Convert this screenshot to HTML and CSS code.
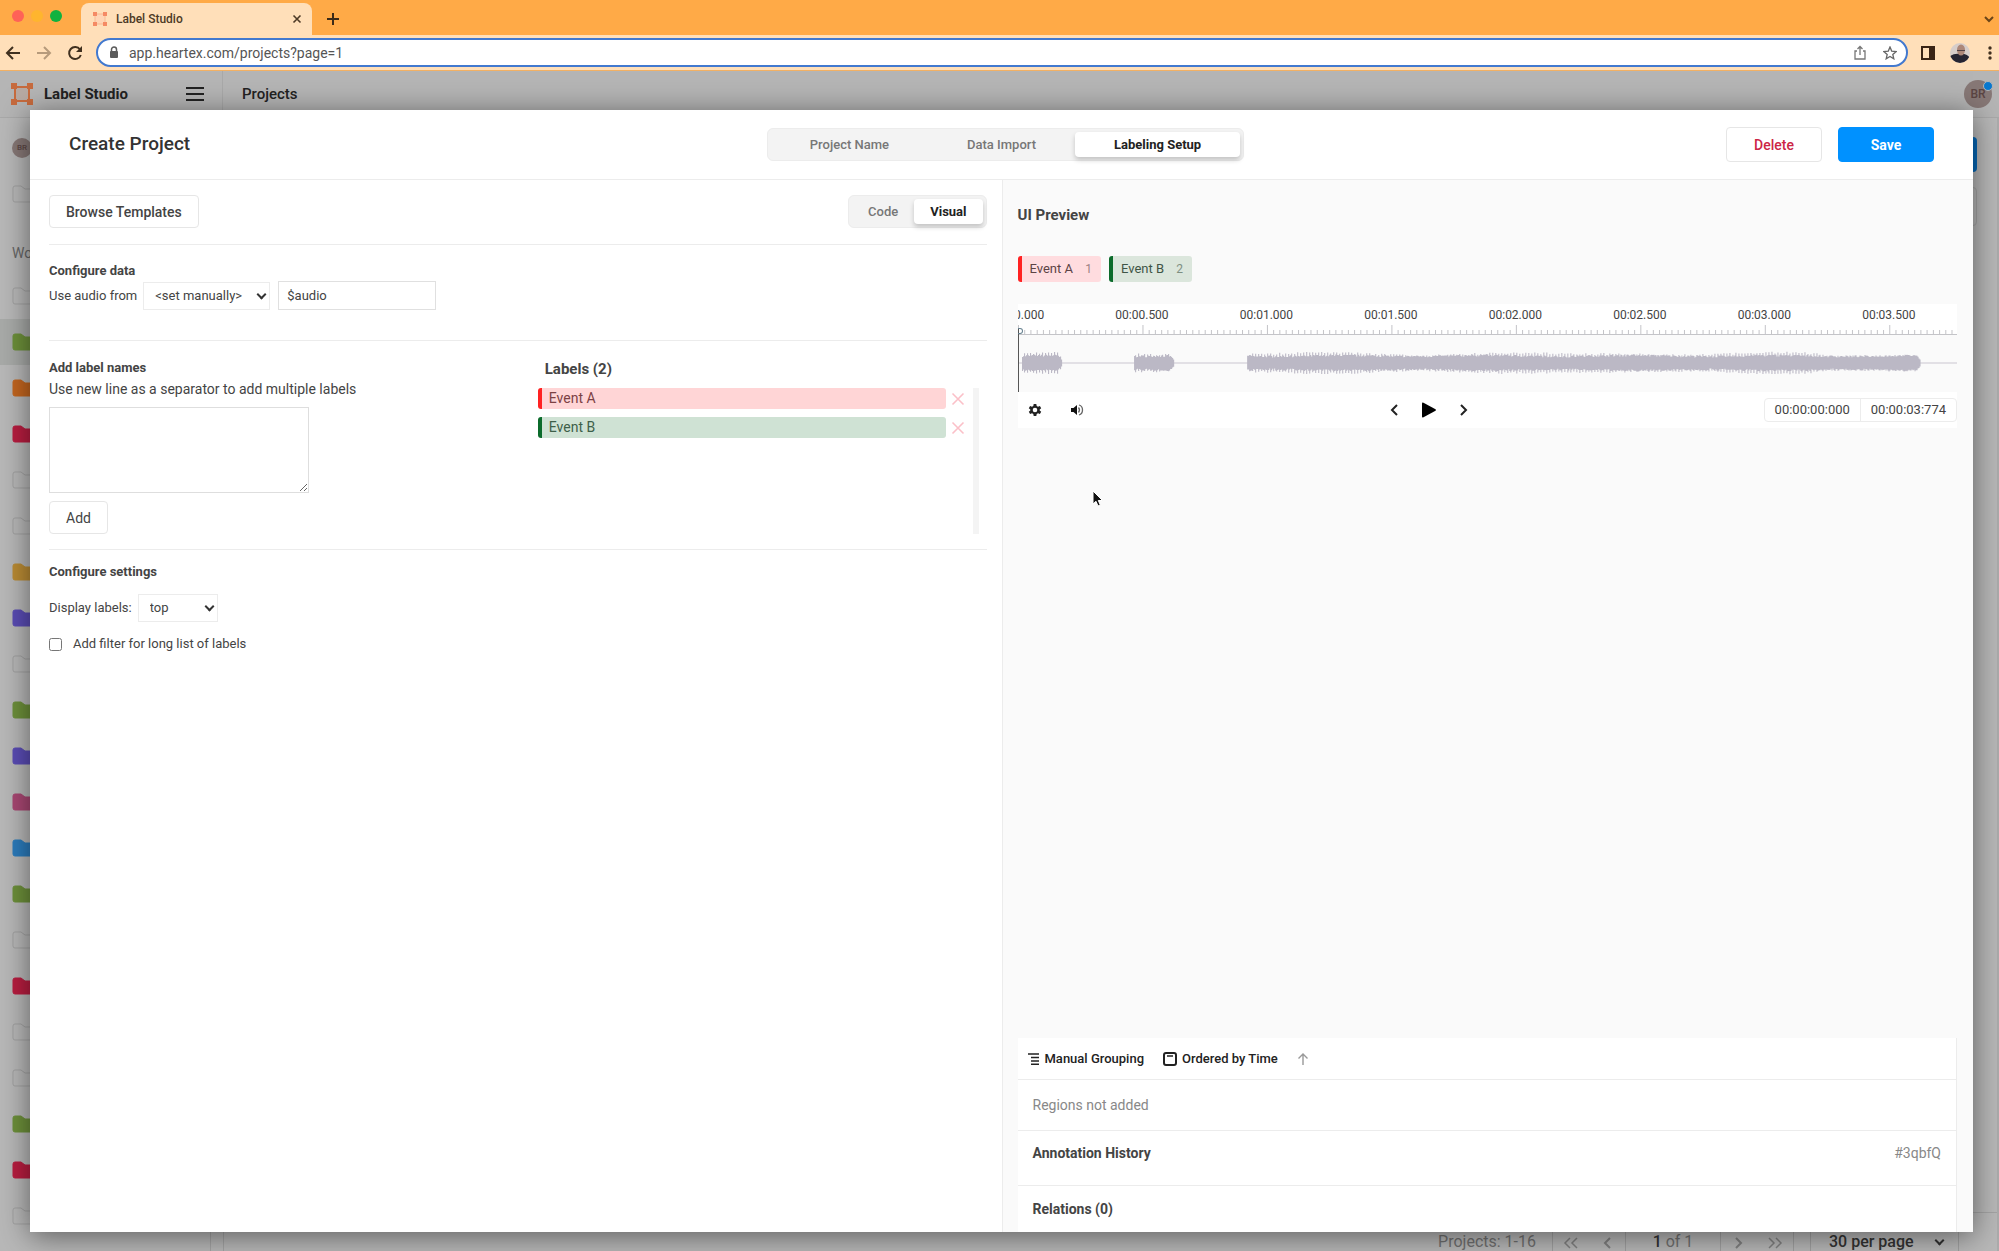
FILE: index.html
```html
<!DOCTYPE html>
<html lang="en">
<head>
  <meta charset="UTF-8">
  <meta name="viewport" content="width=device-width, initial-scale=1.0">
  <title>Label Studio</title>
  <link rel="stylesheet" href="styles.css">
</head>
<body>

  <!-- Shared icon shapes -->
  <svg class="sprite" aria-hidden="true">
    <symbol id="logo" viewBox="0 0 22 22">
      <path d="M4 4H18V18H4Z" fill="currentColor" fill-opacity=".15" stroke="currentColor" stroke-width="2"/>
      <path d="M0 0H6V6H0ZM16 0H22V6H16ZM0 16H6V22H0ZM16 16H22V22H16Z" fill="currentColor"/>
    </symbol>
    <symbol id="folder" viewBox="0 0 24 18">
      <path d="M1 3Q1 1 3 1H9L13 4H21Q23 4 23 6V15Q23 17 21 17H3Q1 17 1 15Z"/>
    </symbol>
    <symbol id="chevron" viewBox="0 0 10 16">
      <path d="M8 3L3 8L8 13" fill="none" stroke="currentColor" stroke-width="2"/>
    </symbol>
  </svg>

  <div class="browser">
    <div class="tab-strip">
      <div class="lights"><i class="red"></i><i class="yellow"></i><i class="green"></i></div>
      <div class="tab">
        <svg class="favicon" viewBox="0 0 16 16"><path d="M3 3H13V13H3Z" fill="#ffd5b5" stroke="#f7ba93" stroke-width="1"/><path d="M1 1H5V5H1ZM11 1H15V5H11ZM1 11H5V15H1ZM11 11H15V15H11Z" fill="#f58a64"/></svg>
        <span>Label Studio</span>
        <button class="icon-btn tab-close" aria-label="Close tab"><svg width="10" height="10" viewBox="0 0 10 10"><path d="M1.500 1.500L8.500 8.500M8.500 1.500L1.500 8.500" stroke="#4d3a26" stroke-width="1.600"/></svg></button>
      </div>
      <button class="icon-btn new-tab" aria-label="New tab"><svg width="12" height="12" viewBox="0 0 12 12"><path d="M6 0V12M0 6H12" stroke="#3c2b18" stroke-width="2"/></svg></button>
      <button class="icon-btn tab-menu" aria-label="Search tabs"><svg width="10" height="8" viewBox="0 0 10 8"><path d="M1 2L5 6L9 2" fill="none" stroke="#6b4519" stroke-width="2"/></svg></button>
    </div>
    <div class="toolbar">
      <button class="icon-btn" aria-label="Back"><svg width="16" height="16" viewBox="0 0 16 16"><path d="M8 2L2 8L8 14M2 8H15" fill="none" stroke="#40301f" stroke-width="2"/></svg></button>
      <button class="icon-btn" aria-label="Forward"><svg width="16" height="16" viewBox="0 0 16 16"><path d="M8 2L14 8L8 14M14 8H1" fill="none" stroke="#b69a7b" stroke-width="2"/></svg></button>
      <button class="icon-btn" aria-label="Reload"><svg width="16" height="16" viewBox="0 0 16 16"><path d="M13 4.500A6 6 0 1 0 13.800 10" fill="none" stroke="#40301f" stroke-width="2"/><path d="M15 1V7H9Z" fill="#40301f"/></svg></button>
      <div class="address">
        <svg width="10" height="13" viewBox="0 0 10 13"><path d="M2.500 6V3.500A2.500 2.500 0 0 1 7.500 3.500V6" fill="none" stroke="#5b5b5b" stroke-width="1.500"/><rect x="1" y="5" width="8" height="7" rx="1" fill="#5b5b5b"/></svg>
        <input type="text" aria-label="Address" value="app.heartex.com/projects?page=1">
        <svg width="14" height="16" viewBox="0 0 14 16"><path d="M4 6H2V14H12V6H10M7 10V2M4.500 4L7 1.500L9.500 4" fill="none" stroke="#777" stroke-width="1.300"/></svg>
        <svg class="star" width="14" height="14" viewBox="0 0 14 14"><path d="M7 1L8.700 5.100L13.200 5.500L9.800 8.400L10.800 12.800L7 10.500L3.200 12.800L4.200 8.400L.8 5.500L5.300 5.100Z" fill="none" stroke="#666" stroke-width="1.300"/></svg>
      </div>
      <button class="icon-btn" aria-label="Side panel"><svg width="14" height="14" viewBox="0 0 14 14"><path d="M1 1H13V13H1Z" fill="none" stroke="#3a2415" stroke-width="2"/><path d="M8 1H13V13H8Z" fill="#3a2415"/></svg></button>
      <button class="icon-btn profile" aria-label="Profile"><svg width="20" height="20" viewBox="0 0 20 20"><defs><clipPath id="face"><circle cx="10" cy="10" r="10"/></clipPath></defs><g clip-path="url(#face)"><path d="M0 0H20V20H0Z" fill="#d6cdca"/><path d="M0 20V13Q5 10 10 11Q16 10 20 15V20Z" fill="#252432"/><ellipse cx="11" cy="7" rx="4" ry="5.500" fill="#ac8779"/><path d="M7 7H15V8H7Z" fill="#504044"/></g></svg></button>
      <button class="icon-btn" aria-label="Menu"><svg width="4" height="14" viewBox="0 0 4 14" fill="#40301f"><circle cx="2" cy="2" r="1.700"/><circle cx="2" cy="7" r="1.700"/><circle cx="2" cy="12" r="1.700"/></svg></button>
    </div>
  </div>

  <div class="app">
    <header class="app-header">
      <svg class="app-logo"><use href="#logo"/></svg>
      <strong>Label Studio</strong>
      <button class="icon-btn" aria-label="Menu"><svg width="18" height="16" viewBox="0 0 18 16"><path d="M0 2H18M0 8H18M0 14H18" stroke="#222" stroke-width="2"/></svg></button>
      <span class="crumb">Projects</span>
      <span class="avatar">BR</span>
    </header>
    <div class="app-body">
      <aside class="sidebar">
        <div class="side-item"><span class="avatar small">BR</span></div>
        <div class="side-item"><svg class="folder"><use href="#folder"/></svg></div>
        <p class="side-title">Workspaces</p>
        <ul class="folders">
          <li><svg class="folder"><use href="#folder"/></svg></li>
          <li class="active"><svg class="folder green"><use href="#folder"/></svg></li>
          <li><svg class="folder orange"><use href="#folder"/></svg></li>
          <li><svg class="folder red"><use href="#folder"/></svg></li>
          <li><svg class="folder"><use href="#folder"/></svg></li>
          <li><svg class="folder"><use href="#folder"/></svg></li>
          <li><svg class="folder yellow"><use href="#folder"/></svg></li>
          <li><svg class="folder purple"><use href="#folder"/></svg></li>
          <li><svg class="folder"><use href="#folder"/></svg></li>
          <li><svg class="folder green"><use href="#folder"/></svg></li>
          <li><svg class="folder purple"><use href="#folder"/></svg></li>
          <li><svg class="folder pink"><use href="#folder"/></svg></li>
          <li><svg class="folder blue"><use href="#folder"/></svg></li>
          <li><svg class="folder green"><use href="#folder"/></svg></li>
          <li><svg class="folder"><use href="#folder"/></svg></li>
          <li><svg class="folder red"><use href="#folder"/></svg></li>
          <li><svg class="folder"><use href="#folder"/></svg></li>
          <li><svg class="folder"><use href="#folder"/></svg></li>
          <li><svg class="folder green"><use href="#folder"/></svg></li>
          <li><svg class="folder red"><use href="#folder"/></svg></li>
          <li><svg class="folder"><use href="#folder"/></svg></li>
        </ul>
      </aside>
      <main class="projects">
        <div class="project-list">
          <div class="create-edge"></div>
          <div class="card-edge"></div>
        </div>
        <footer class="pagination">
          <span>Projects: 1-16</span>
          <div class="pages">
            <button aria-label="First page"><svg width="16" height="16" viewBox="0 0 16 16"><path d="M7 3L2 8L7 13M14 3L9 8L14 13" fill="none" stroke="currentColor" stroke-width="1.500"/></svg></button>
            <button aria-label="Previous page"><svg width="10" height="16"><use href="#chevron"/></svg></button>
            <span class="current"><b>1</b> of 1</span>
            <button aria-label="Next page"><svg class="flip" width="10" height="16"><use href="#chevron"/></svg></button>
            <button aria-label="Last page"><svg class="flip" width="16" height="16" viewBox="0 0 16 16"><path d="M7 3L2 8L7 13M14 3L9 8L14 13" fill="none" stroke="currentColor" stroke-width="1.500"/></svg></button>
          </div>
          <span class="select per-page"><select aria-label="Page size"><option>30 per page</option></select></span>
        </footer>
      </main>
    </div>

    <div class="modal" role="dialog" aria-labelledby="modal-title">
      <header class="modal-header">
        <h1 id="modal-title">Create Project</h1>
        <nav class="toggle steps">
          <button>Project Name</button>
          <button>Data Import</button>
          <button class="selected">Labeling Setup</button>
        </nav>
        <div class="actions">
          <button class="btn danger">Delete</button>
          <button class="btn primary">Save</button>
        </div>
      </header>

      <div class="modal-body">
        <section class="config">
          <div class="config-bar">
            <button class="btn">Browse Templates</button>
            <div class="toggle">
              <button>Code</button>
              <button class="selected">Visual</button>
            </div>
          </div>

          <div class="config-data">
            <h2>Configure data</h2>
            <div class="row">
              <label for="source">Use audio from</label>
              <span class="select source"><select id="source"><option>&lt;set manually&gt;</option></select></span>
              <input class="variable" type="text" aria-label="Variable" value="$audio">
            </div>
          </div>

          <div class="config-labels">
            <div>
              <h2><label for="names">Add label names</label></h2>
              <p>Use new line as a separator to add multiple labels</p>
              <textarea id="names"></textarea>
              <button class="btn">Add</button>
            </div>
            <div class="labels">
              <h3>Labels (2)</h3>
              <ul>
                <li><span class="label event-a">Event A</span><button class="icon-btn" aria-label="Delete Event A"><svg width="14" height="14" viewBox="0 0 14 14"><path d="M1.500 1.500L12.500 12.500M12.500 1.500L1.500 12.500" stroke="#fbc0c8" stroke-width="1.600"/></svg></button></li>
                <li><span class="label event-b">Event B</span><button class="icon-btn" aria-label="Delete Event B"><svg width="14" height="14" viewBox="0 0 14 14"><path d="M1.500 1.500L12.500 12.500M12.500 1.500L1.500 12.500" stroke="#fbc0c8" stroke-width="1.600"/></svg></button></li>
              </ul>
            </div>
          </div>

          <div class="config-settings">
            <h2>Configure settings</h2>
            <div class="row">
              <label for="display">Display labels:</label>
              <span class="select display"><select id="display"><option>top</option></select></span>
            </div>
            <label class="check"><input type="checkbox"> Add filter for long list of labels</label>
          </div>
        </section>

        <section class="preview">
          <h3>UI Preview</h3>
          <div class="tags">
            <span class="tag event-a">Event A <i>1</i></span>
            <span class="tag event-b">Event B <i>2</i></span>
          </div>

          <div class="audio">
            <ol class="times">
              <li>00:00.000</li><li>00:00.500</li><li>00:01.000</li><li>00:01.500</li><li>00:02.000</li><li>00:02.500</li><li>00:03.000</li><li>00:03.500</li>
            </ol>
            <svg class="ticks" viewBox="0 0 939 9" preserveAspectRatio="none"><path id="ticks" stroke="#c4c4c8"/></svg>
            <div class="wave">
              <svg viewBox="0 0 939 57" preserveAspectRatio="none"><path d="M0 28H939" stroke="#c9c6cf"/><path id="wave" fill="#bbb8c5"/></svg>
            </div>
            <div class="playhead"></div>
            <div class="controls">
              <div class="left">
                <button class="icon-btn" aria-label="Settings"><svg width="14" height="14" viewBox="0 0 14 14"><path d="M5.700 1H8.300L8.700 2.900L10 3.700L11.900 3L13.200 5.300L11.700 6.500V7.500L13.200 8.700L11.900 11L10 10.300L8.700 11.100L8.300 13H5.700L5.300 11.100L4 10.300L2.100 11L.8 8.700L2.300 7.500V6.500L.8 5.300L2.100 3L4 3.700L5.300 2.900ZM7 4.700A2.300 2.300 0 1 0 7 9.300A2.300 2.300 0 1 0 7 4.700Z" fill="#222" fill-rule="evenodd"/></svg></button>
                <button class="icon-btn" aria-label="Volume"><svg width="14" height="14" viewBox="0 0 14 14"><path d="M1 5H3.500L7 2V12L3.500 9H1Z" fill="#111"/><path d="M8.500 4.500Q10.500 7 8.500 9.500M9 2Q12.500 3 12.500 7T9 12" fill="none" stroke="#666" stroke-width="1.300"/></svg></button>
              </div>
              <div class="transport">
                <button class="icon-btn" aria-label="Step back"><svg width="10" height="16"><use href="#chevron"/></svg></button>
                <button class="icon-btn" aria-label="Play"><svg width="16" height="16" viewBox="0 0 16 16"><path d="M1 1.500Q1 0 2.500 .8L14.500 7.300Q15.500 8 14.500 8.700L2.500 15.200Q1 16 1 14.500Z"/></svg></button>
                <button class="icon-btn" aria-label="Step forward"><svg class="flip" width="10" height="16"><use href="#chevron"/></svg></button>
              </div>
              <div class="clock"><span>00:00:00:000</span><span>00:00:03:774</span></div>
            </div>
          </div>

          <div class="outliner">
            <div class="group-bar">
              <button class="icon-btn"><svg width="12" height="12" viewBox="0 0 12 12"><path d="M0 1H11M3 4.500H11M3 8H11M3 11.300H11" stroke="#222" stroke-width="1.500"/></svg>Manual Grouping</button>
              <button class="icon-btn"><svg width="14" height="14" viewBox="0 0 14 14"><rect x="1" y="1" width="12" height="12" rx="2" fill="none" stroke="#222" stroke-width="2"/><path d="M4 4H10" stroke="#222" stroke-width="1.500"/></svg>Ordered by Time</button>
              <button class="icon-btn" aria-label="Sort direction"><svg width="12" height="14" viewBox="0 0 12 14"><path d="M6 13V2M1.500 6.500L6 2L10.500 6.500" fill="none" stroke="#999" stroke-width="1.400"/></svg></button>
            </div>
            <p class="empty">Regions not added</p>
            <div class="history"><b>Annotation History</b><span>#3qbfQ</span></div>
            <div class="relations"><b>Relations (0)</b></div>
          </div>
        </section>
      </div>
    </div>
  </div>

  <svg class="cursor" width="12" height="18" viewBox="0 0 12 18"><path d="M1 1V14L4 11.300L6 16L8.300 15L6.300 10.500H10.500Z" fill="#111" stroke="#fff"/></svg>

  <script src="script.js"></script>
</body>
</html>
```
FILE: styles.css
```css
* {
  box-sizing: border-box;
}

body {
  margin: 0;
  height: 100vh;
  display: flex;
  flex-direction: column;
  overflow: hidden;
  font-family: Roboto, "Liberation Sans", sans-serif;
  font-size: 14px;
  line-height: 20px;
  color: #444;
}

h1, h2, h3, p, ul, ol {
  margin: 0;
  padding: 0;
  list-style: none;
}

button, input, select, textarea {
  font: inherit;
  color: inherit;
}

svg {
  flex: none;
}

.sprite {
  position: absolute;
  width: 0;
  height: 0;
}

.icon-btn {
  display: flex;
  align-items: center;
  padding: 0;
  border: 0;
  background: none;
}

.flip {
  transform: scaleX(-1);
}

/* Browser window */
.tab-strip {
  height: 35px;
  display: flex;
  align-items: center;
  padding: 3px 5px 0 12px;
  background: #ffaa47;
}

.lights {
  display: flex;
  align-self: flex-start;
  gap: 7px;
  width: 69px;
  padding-top: 7px;
}

.lights i {
  width: 12px;
  height: 12px;
  border-radius: 50%;
}

.lights .red { background: #ff6257; }
.lights .yellow { background: #ffb52e; }
.lights .green { background: #10b23f; }

.tab {
  display: flex;
  align-items: center;
  gap: 8px;
  width: 231px;
  height: 32px;
  padding: 0 10px 0 11px;
  border-radius: 8px 8px 0 0;
  background: #ffdfb9;
  font-size: 12px;
  font-weight: 500;
  color: #4d3a26;
}

.favicon {
  width: 16px;
  height: 16px;
}

.tab-close {
  margin-left: auto;
}

.new-tab {
  margin-left: 15px;
}

.tab-menu {
  margin-left: auto;
}

.toolbar {
  height: 36px;
  display: flex;
  align-items: center;
  gap: 15px;
  padding: 0 7px 0 5px;
  border-bottom: 1px solid #f2b063;
  background: #ffdfb9;
}

.profile {
  margin-right: 3px;
}

.address {
  flex: 1;
  display: flex;
  align-items: center;
  height: 29px;
  margin: 0 -2px;
  padding: 0 9px 0 11px;
  border: 2px solid #4279cf;
  border-radius: 15px;
  background: #fff;
}

.address input {
  flex: 1;
  padding: 0 10px;
  border: 0;
  outline: 0;
  background: none;
  color: #555;
}

.address .star {
  margin-left: 16px;
}

/* Dimmed application page */
.app {
  flex: 1;
  min-height: 0;
  position: relative;
  display: flex;
  flex-direction: column;
  background: #b8b8b8;
}

.app-header {
  display: flex;
  align-items: center;
  height: 47px;
  padding: 0 7px 0 11px;
  border-bottom: 1px solid #a9a9a9;
  background: #b5b5b5;
  font-size: 15px;
  color: #222;
}

.app-logo {
  width: 22px;
  height: 22px;
  margin-right: 11px;
  color: #c76b3e;
}

.app-header strong {
  width: 142px;
}

.crumb {
  margin-left: 18px;
  padding-left: 19px;
  border-left: 1px solid #a9a9a9;
  font-weight: 500;
  line-height: 47px;
}

.avatar {
  position: relative;
  width: 28px;
  margin-left: auto;
  border-radius: 50%;
  background: #877876;
  font-size: 12px;
  font-weight: 500;
  line-height: 28px;
  text-align: center;
  color: #5b4543;
}

/* Unread dot on the user picture */
.app-header .avatar::after {
  content: "";
  position: absolute;
  top: 1px;
  right: -1px;
  width: 8px;
  height: 8px;
  border: 1px solid #b5b5b5;
  border-radius: 50%;
  background: #0878cf;
}

.avatar.small {
  width: 20px;
  margin: 0;
  font-size: 8px;
  line-height: 20px;
}

.app-body {
  flex: 1;
  min-height: 0;
  display: flex;
  overflow: hidden;
}

.sidebar {
  width: 211px;
  padding-top: 7px;
  border-right: 1px solid #a4a4a4;
}

.side-item, .folders li {
  display: flex;
  align-items: center;
  height: 46px;
  padding-left: 12px;
}

.side-title {
  height: 56px;
  padding: 26px 12px 0;
  color: #666;
}

.folders .active {
  background: #a8aaa8;
}

.folder {
  width: 24px;
  height: 18px;
  fill: none;
  stroke: #a1a1a1;
}

.folder.green { fill: #6d903a; stroke: #6d903a; }
.folder.orange { fill: #c4661f; stroke: #c4661f; }
.folder.red { fill: #b91d40; stroke: #b91d40; }
.folder.yellow { fill: #bb8c34; stroke: #bb8c34; }
.folder.purple { fill: #5a4cb5; stroke: #5a4cb5; }
.folder.pink { fill: #a94773; stroke: #a94773; }
.folder.blue { fill: #2b7cbd; stroke: #2b7cbd; }

.projects {
  flex: 1;
  display: flex;
  flex-direction: column;
  margin-left: 12px;
  border-left: 1px solid #a4a4a4;
  border-right: 2px solid #acacac;
}

.project-list {
  flex: 1;
  padding: 19px 20px;
  border-bottom: 1px solid #a4a4a4;
}

.create-edge {
  height: 35px;
  border-radius: 4px;
  background: #0668b8;
}

.card-edge {
  height: 39px;
  margin-top: 15px;
  border: 1px solid #a4a4a4;
  border-radius: 4px;
}

.pagination {
  display: flex;
  align-items: center;
  justify-content: flex-end;
  gap: 16px;
  height: 38px;
  margin-top: 10px;
  margin-bottom: -10px;
  padding-right: 38px;
  font-size: 16px;
  color: #707070;
}

.pages {
  display: flex;
  height: 38px;
  border: 1px solid #a0a0a0;
  line-height: 36px;
}

.pages button {
  width: 36px;
  padding: 0;
  border: 0;
  background: none;
  color: #808080;
}

.pages svg {
  vertical-align: middle;
}

.pages .current {
  width: 96px;
  border: solid #a0a0a0;
  border-width: 0 1px;
  text-align: center;
}

.pages b, .per-page {
  font-weight: 500;
  color: #333;
}

/* Modal */
.modal {
  position: absolute;
  inset: 39px 26px 19px 30px;
  display: flex;
  flex-direction: column;
  background: #fff;
  box-shadow: 0 4px 28px rgba(0, 0, 0, .5);
}

.modal-header {
  display: grid;
  grid-template-columns: 1fr auto 1fr;
  align-items: center;
  height: 70px;
  padding: 0 39px;
  border-bottom: 1px solid #ececec;
}

h1 {
  padding-bottom: 2px;
  font-size: 19px;
  font-weight: 500;
  color: #333;
}

h2 {
  font-size: 13px;
  font-weight: 700;
}

h3 {
  font-size: 15px;
  font-weight: 700;
}

.toggle {
  display: flex;
  height: 33px;
  padding: 3px;
  border: 1px solid #ececec;
  border-radius: 6px;
  background: #f3f3f3;
}

.toggle button {
  padding: 0 16px;
  border: 0;
  border-radius: 4px;
  background: none;
  font-size: 13px;
  font-weight: 500;
  color: #777;
}

.toggle button.selected {
  background: #fff;
  box-shadow: 0 3px 5px rgba(0, 0, 0, .2);
  font-weight: 700;
  color: #222;
}

.steps {
  margin-left: 8px;
}

.steps button {
  padding: 0 39px;
}

.actions {
  display: flex;
  justify-content: flex-end;
  gap: 16px;
}

.btn {
  height: 33px;
  padding: 0 16px;
  border: 1px solid #e6e6e6;
  border-radius: 4px;
  background: #fff;
  font-weight: 500;
}

.actions .btn {
  width: 96px;
  height: 35px;
}

.btn.danger {
  color: #cc2545;
}

.btn.primary {
  border-color: #0091ff;
  background: #0091ff;
  font-weight: 700;
  color: #fff;
}

.modal-body {
  flex: 1;
  min-height: 0;
  display: grid;
  grid-template-columns: 1fr 1fr;
}

/* Left pane */
.config {
  padding: 0 15px 0 19px;
}

.config-bar {
  display: flex;
  justify-content: space-between;
  padding: 15px 0 16px;
}

.config-data, .config-labels, .config-settings {
  border-top: 1px solid #ececec;
}

.row {
  display: flex;
  align-items: center;
}

.row, .check {
  font-size: 13px;
}

.config-data {
  height: 96px;
  padding-top: 16px;
}

.select {
  position: relative;
}

.select select {
  width: 100%;
  height: 28px;
  padding: 0 11px;
  border: 1px solid #ececec;
  background: #fff;
  appearance: none;
}

/* Arrow laid over the native select */
.select::after {
  content: "";
  position: absolute;
  top: 9px;
  right: 5px;
  width: 5px;
  height: 5px;
  border: solid #333;
  border-width: 0 2px 2px 0;
  transform: rotate(45deg);
}

.source {
  width: 127px;
  margin: 0 8px 0 6px;
}

.display {
  width: 80px;
  margin-left: 6px;
}

.per-page {
  width: 149px;
}

.per-page select {
  height: 38px;
  padding: 0 18px;
  border-color: #a0a0a0;
  background: none;
}

.per-page::after {
  top: 14px;
  right: 16px;
}

.variable {
  width: 158px;
  height: 29px;
  padding: 0 8px;
  border: 1px solid #e0e0e0;
}

.config-labels {
  display: grid;
  grid-template-columns: 1fr 1fr;
  height: 209px;
  padding-top: 17px;
}

.config-labels p {
  margin-top: 1px;
}

textarea {
  display: block;
  width: 260px;
  height: 86px;
  margin: 8px 0;
  border: 1px solid #dedede;
}

.config-labels .btn {
  font-weight: 400;
}

.labels {
  padding-right: 8px;
}

.labels h3 {
  padding: 1px 0 9px 27px;
}

.labels ul {
  height: 146px;
  padding-left: 20px;
  border-right: 6px solid #f4f4f4;
}

.labels li {
  display: flex;
  gap: 5px;
  padding-right: 8px;
  margin-bottom: 8px;
}

.label {
  flex: 1;
  padding-left: 7px;
  line-height: 21px;
}

.label, .tag {
  border-left: 4px solid;
  border-radius: 3px;
}

.label.event-a, .tag.event-a {
  border-color: #ff2222;
}

.label.event-b, .tag.event-b {
  border-color: #0b6b2b;
}

.label.event-a { background: #ffd5d6; color: #7c4144; }
.label.event-b { background: #cfe2d4; color: #3e5f49; }

.config-settings {
  padding-top: 12px;
}

.config-settings .row {
  margin: 12px 0;
}

.check {
  display: flex;
  align-items: center;
  gap: 11px;
}

.check input {
  width: 13px;
  height: 13px;
  margin: 0;
}

/* Right pane */
.preview {
  display: flex;
  flex-direction: column;
  padding: 25px 16px 0 15px;
  border-left: 1px solid #ececec;
  background: #fafafa;
}

.tags {
  display: flex;
  gap: 8px;
  margin: 31px 0 22px;
}

.tag {
  padding: 0 9px 0 8px;
  font-size: 13px;
  line-height: 25px;
}

.tag.event-a { background: #ffdcdf; color: #5c4345; }
.tag.event-b { background: #dbe6dc; color: #3f5546; }

.tag i {
  margin-left: 9px;
  font-size: 12px;
  font-style: normal;
  opacity: .6;
}

.audio {
  position: relative;
  background: #fff;
}

.times {
  display: flex;
  overflow: hidden;
  padding-top: 1px;
  font-size: 12px;
}

/* 500 ms of a 3774 ms clip, centred on its tick */
.times li {
  flex: 0 0 13.25%;
  text-align: center;
}

.times li:first-child {
  margin-left: -6.625%;
}

.ticks {
  display: block;
  width: 100%;
  height: 9px;
}

.wave {
  border-top: 1px solid #c4c4c8;
  background: #fafafa;
}

.wave svg {
  display: block;
  width: 100%;
  height: 57px;
}

/* Playback position, drawn over the ruler and wave */
.playhead {
  position: absolute;
  top: 24px;
  left: 0;
  width: 1px;
  height: 64px;
  background: #555;
}

.playhead::before {
  content: "";
  position: absolute;
  left: 0;
  width: 4px;
  height: 4px;
  border: 1px solid #66808f;
  border-left: 0;
  border-radius: 0 3px 3px 0;
}

.controls {
  display: flex;
  align-items: center;
  justify-content: space-between;
  height: 36px;
  color: #222;
}

.left {
  display: flex;
  gap: 28px;
  padding: 0 10px;
}

.transport {
  display: flex;
  gap: 22px;
}

.clock {
  display: flex;
  border: 1px solid #ececec;
  border-radius: 4px;
  font-size: 13px;
  color: #444;
}

.clock span {
  padding: 0 10px;
  line-height: 22px;
}

.clock span + span {
  border-left: 1px solid #ececec;
}

.outliner {
  margin-top: auto;
  border-right: 1px solid #ececec;
  background: #fff;
}

.group-bar {
  display: flex;
  gap: 19px;
  height: 41px;
  padding-left: 10px;
  font-size: 13px;
  font-weight: 500;
  color: #222;
}

.group-bar button {
  gap: 5px;
}

.empty, .history, .relations {
  padding: 0 15px;
  border-top: 1px solid #ececec;
}

.empty {
  line-height: 50px;
  color: #888;
}

.history {
  display: flex;
  justify-content: space-between;
  height: 55px;
  line-height: 45px;
}

.history span {
  color: #888;
}

.relations {
  line-height: 46px;
}

/* Mouse pointer over the window */
.cursor {
  position: absolute;
  top: 490px;
  left: 1092px;
}
```
FILE: script.js
```js
// Ruler: a tick every 25 ms, a long one every 500 ms
const step = 939 / 3774 * 25;
let ticks = "";
for (let i = 0; i * step < 939; i++) {
  const x = (i * step + 0.5).toFixed(1);
  ticks += `M${x} ${i % 20 === 0 ? 0 : 5}V9`;
}
document.getElementById("ticks").setAttribute("d", ticks);

// Repeatable noise, so the clip looks the same on each load
let seed = 7;
function noise() {
  seed = (seed * 16807) % 2147483647;
  return seed / 2147483647;
}

// Sound bursts: [start, end]
const bursts = [[4, 44], [116, 156], [229, 902]];
let wave = "";
bursts.forEach(([start, end]) => {
  for (let x = start; x < end; x++) {
    const body = 6 + Math.sin(x / 23) * 0.5;
    const loud = x > 800 ? 0.5 : 2 + Math.sin(x / 37);
    const spike = x % 3 === 0 ? loud : 0;
    const edge = Math.min(1, (end - x + 3) / 8);
    const up = (body + spike + noise() * 2) * edge;
    const down = (body + spike + noise() * 2) * edge;
    wave += `M${x} ${(28 - up).toFixed(1)}h1.1V${(28 + down).toFixed(1)}h-1.1Z`;
  }
});
document.getElementById("wave").setAttribute("d", wave);
```
